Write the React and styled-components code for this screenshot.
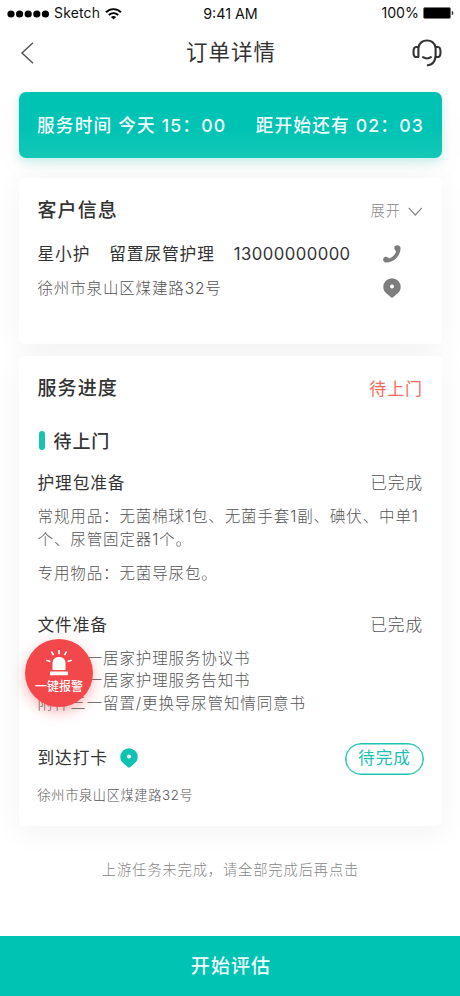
import React from "react";
import styled, { createGlobalStyle } from "styled-components";

const GlobalStyle = createGlobalStyle`
  * { box-sizing: border-box; }
  body {
    margin: 0;
    background: #fff;
    font-family: Inter, "Noto Sans CJK SC", sans-serif;
  }
`;

const teal = "#00c3b3";

const Screen = styled.div`
  position: relative;
  display: flex;
  flex-direction: column;
  width: 460px;
  height: 996px;
  overflow: hidden;
  background: #fff;
`;

const StatusBar = styled.div`
  display: grid;
  grid-template-columns: 1fr auto 1fr;
  align-items: center;
  height: 27px;
  padding: 0 6px 0 7px;
  color: #111;
  font-size: 14.5px;
  line-height: 20px;
`;

const StatusGroup = styled.div`
  display: flex;
  align-items: center;
  justify-content: ${(p) => (p.$end ? "flex-end" : "flex-start")};
  gap: ${(p) => p.$gap}px;
`;

const NavBar = styled.header`
  display: grid;
  grid-template-columns: 1fr auto 1fr;
  align-items: center;
  height: 51px;
  padding: 0 18px 0 20px;
`;

const NavAction = styled.div`
  display: flex;
  justify-content: ${(p) => (p.$end ? "flex-end" : "flex-start")};
`;

const Text = styled.span`
  padding-top: ${(p) => p.$drop || 0}px;
  color: ${(p) => p.$color || "#333"};
  font-size: ${(p) => p.$size}px;
  font-weight: ${(p) => p.$weight || 400};
  letter-spacing: ${(p) => p.$track || 0}px;
  line-height: 1.3;
  white-space: nowrap;
`;

const Content = styled.main`
  display: flex;
  flex-direction: column;
  padding: 14px 18px 0 19px;
`;

const Banner = styled.section`
  display: flex;
  align-items: center;
  justify-content: space-between;
  height: 66px;
  margin-bottom: 20px;
  padding: 0 18px 0 18px;
  border-radius: 7px;
  background: linear-gradient(${teal} 55%, #15c7b6);
  box-shadow: 0 4px 10px rgba(0, 195, 179, 0.22), 0 12px 36px rgba(0, 0, 0, 0.03);
`;

const Card = styled.section`
  display: flex;
  flex-direction: column;
  height: ${(p) => p.$height}px;
  margin-bottom: 12px;
  padding: 10px 19px 0 18.5px;
  border-radius: 5px;
  background: #fff;
  box-shadow: 0 6px 30px rgba(0, 0, 0, 0.055);
`;

const Row = styled.div`
  display: flex;
  align-items: center;
  justify-content: ${(p) => (p.$spread ? "space-between" : "flex-start")};
  gap: ${(p) => p.$gap || 0}px;
  height: ${(p) => p.$height}px;
  margin-top: ${(p) => p.$top || 0}px;
  flex: none;
`;

const ContactIcon = styled.div`
  display: flex;
  justify-content: center;
  width: 24px;
  margin-left: auto;
  margin-right: 19px;
`;

const StageMarker = styled.div`
  width: 6px;
  height: 19px;
  margin-left: 1px;
  border-radius: 3px;
  background: #15c4b3;
`;

const Paragraph = styled.p`
  margin: ${(p) => p.$top}px -8px 0 0;
  color: #555;
  font-size: 15.5px;
  font-weight: 300;
  letter-spacing: 0.88px;
  line-height: ${(p) => p.$line}px;
  white-space: nowrap;
`;

const PendingButton = styled.button`
  display: flex;
  align-items: center;
  justify-content: center;
  width: 79px;
  height: 32px;
  margin-right: -1px;
  padding: 0 0 1px;
  border: 1px solid #1dc2b3;
  box-shadow: inset 0 0 0 0.5px #1dc2b3;
  border-radius: 16px;
  background: #fff;
  font-family: inherit;
`;

const Hint = styled.div`
  display: flex;
  justify-content: center;
  margin-top: 20px;
`;

const StartButton = styled.button`
  display: flex;
  align-items: center;
  justify-content: center;
  height: 60px;
  margin-top: auto;
  padding: 0 0 0 2px;
  border: 0;
  background: ${teal};
  font-family: inherit;
`;

const AlarmButton = styled.button`
  position: absolute;
  left: 25px;
  top: 639px;
  display: flex;
  flex-direction: column;
  align-items: center;
  gap: 2px;
  width: 68px;
  height: 68px;
  padding: 10px 0 0;
  border: 0;
  border-radius: 50%;
  background: #f3484b;
  box-shadow: 0 5px 14px rgba(243, 72, 75, 0.38);
  font-family: inherit;
`;

const SignalDots = () => (
  <svg width="42" height="8" viewBox="0 0 42 8">
    {[4, 12.6, 21.2, 29.8, 38.4].map((x) => (
      <circle key={x} cx={x} cy="4" r="3.6" fill="#000" />
    ))}
  </svg>
);

const Wifi = () => (
  <svg width="17" height="12" viewBox="0 0 17 12" fill="none" stroke="#000" strokeWidth="1.9">
    <path d="M1 4.2C5.2.1 11.8.1 16 4.2" />
    <path d="M3.8 7C6.5 4.5 10.5 4.5 13.2 7" />
    <path d="M5.9 8.9C7.4 7.6 9.6 7.6 11.1 8.9L8.5 11.6Z" fill="#000" stroke="none" />
  </svg>
);

const Battery = () => (
  <svg width="31" height="12" viewBox="0 0 31 12">
    <rect x=".5" y=".5" width="27" height="11" rx="1.5" fill="#000" stroke="#777" />
    <path d="M28.8 4v4c1-.3 1.5-1 1.5-2s-.5-1.7-1.5-2Z" fill="#222" />
  </svg>
);

const BackArrow = () => (
  <svg width="15" height="22" viewBox="0 0 15 22" fill="none" stroke="#555" strokeWidth="1.5">
    <path d="M13 .8 2 11l11 10.2" />
  </svg>
);

const Headset = () => (
  <svg width="30" height="28" viewBox="0 0 30 28" fill="none" stroke="#333" strokeWidth="2.1" strokeLinecap="round" strokeLinejoin="round">
    <path d="M6.4 8.1C7.6 4 10.9 1.5 15 1.5s7.4 2.5 8.6 6.6" />
    <path d="M6.4 8H4Q1.5 8 1.5 13T4 18h2.4Z" />
    <path d="M23.6 8H26q2.5 0 2.5 5T26 18h-2.4Z" />
    <path d="M23.6 18c-.8 4.7-3.7 7.8-7.8 8.3M11 18.2c2.5 1.6 5.4 1.6 7.9 0" />
  </svg>
);

const ChevronDown = () => (
  <svg width="16" height="14" viewBox="0 0 16 14" fill="none" stroke="#888" strokeWidth="1.2">
    <path d="m1.7 4.8 6.6 7.2 6.6-7.2" />
  </svg>
);

const Phone = () => (
  <svg width="18" height="18" viewBox="0 0 18 18" fill="#7d7d7d">
    <path d="M11.5 1.8C12.4.3 14.4-.1 16 .7c1.3.7 1.7 1.8 1.5 3.3C16.8 11.6 11 17 3.5 17.5c-1.3.1-2.4-.4-3-1.5-.8-1.4-.4-3 .9-3.8 1.3-.7 2.8-.3 3.8.6.6.5 1.2.5 2 .1 2.4-1.1 4.4-3 5.5-5.2.4-.9.3-1.4-.3-2.1-1-1.1-1.5-2.5-.9-3.8Z" />
  </svg>
);

const Pin = ({ color }) => (
  <svg width="18" height="20" viewBox="0 0 18 20">
    <path d="M9 .3A8.7 8.7 0 0 0 .3 9c0 2.5 1 4.5 2.7 6l4.9 4.3q1.1.8 2.2 0L15 15c1.7-1.5 2.7-3.5 2.7-6A8.7 8.7 0 0 0 9 .3Z" fill={color} />
    <circle cx="9" cy="8.6" r="2" fill="#fff" />
  </svg>
);

const Siren = () => (
  <svg width="28" height="28" viewBox="0 0 28 28" fill="#fff">
    <path d="M7.5 21v-6.5C7.5 10.2 10 8 14 8s6.5 2.2 6.5 6.5V21Z" />
    <rect x="5" y="22.5" width="18" height="3.7" rx=".6" />
    <path d="M14 1v4.2M6.4 2.5l2.2 3.6M21.6 2.5l-2.2 3.6M1.3 11.2l4.1 1.2M26.7 11.2l-4.1 1.2" stroke="#fff" strokeWidth="1.6" />
  </svg>
);

export default function App() {
  return (
    <>
      <GlobalStyle />
      <Screen lang="zh-CN">
        <StatusBar>
          <StatusGroup $gap={5}>
            <SignalDots />
            <Text $size={14} $color="#111" $track={0.15}>Sketch</Text>
            <Wifi />
          </StatusGroup>
          <Text $size={14.3} $color="#111" $drop={1}>9:41 AM</Text>
          <StatusGroup $end $gap={4}>
            <Text $size={14.2} $color="#111">100%</Text>
            <Battery />
          </StatusGroup>
        </StatusBar>

        <NavBar>
          <NavAction><BackArrow /></NavAction>
          <Text $size={21.5} $track={1}>订单详情</Text>
          <NavAction $end><Headset /></NavAction>
        </NavBar>

        <Content>
          <Banner>
            <Text $size={17.7} $weight={500} $track={1.15} $color="#f2ffff">服务时间 今天 15：00</Text>
            <Text $size={17.7} $weight={500} $track={1.15} $color="#f2ffff">距开始还有 02：03</Text>
          </Banner>

          <Card $height={166}>
            <Row $height={44} $spread>
              <Text $size={19} $weight={500} $track={1.1} $drop={3}>客户信息</Text>
              <Row $gap={6}>
                <Text $size={14.3} $track={0.9} $color="#888" $drop={2} $weight={300}>展开</Text>
                <ChevronDown />
              </Row>
            </Row>
            <Row $height={44} $gap={19}>
              <Text $size={16.7} $track={0.9} $drop={2}>星小护</Text>
              <Text $size={16.7} $track={0.9} $drop={2}>留置尿管护理</Text>
              <Text $size={16.7} $track={0.45} $drop={2}>13000000000</Text>
              <ContactIcon><Phone /></ContactIcon>
            </Row>
            <Row $height={24}>
              <Text $size={15.5} $track={0.85} $color="#555" $weight={300} $drop={2}>徐州市泉山区煤建路32号</Text>
              <ContactIcon><Pin color="#7d7d7d" /></ContactIcon>
            </Row>
          </Card>

          <Card $height={470}>
            <Row $height={44} $spread>
              <Text $size={19} $weight={500} $track={1.1} $drop={3}>服务进度</Text>
              <Text $size={17} $track={0.9} $color="#f56e5b" $drop={2}>待上门</Text>
            </Row>
            <Row $height={60} $gap={9}>
              <StageMarker />
              <Text $size={18} $weight={500} $track={0.9} $drop={3}>待上门</Text>
            </Row>
            <Row $height={24} $spread>
              <Text $size={16.7} $track={0.9} $drop={3}>护理包准备</Text>
              <Text $size={16.7} $track={0.9} $color="#555" $weight={300} $drop={3}>已完成</Text>
            </Row>
            <Paragraph $top={11} $line={23}>
              常规用品：无菌棉球1包、无菌手套1副、碘伏、中单1
              <br />
              个、尿管固定器1个。
            </Paragraph>
            <Paragraph $top={11} $line={23}>专用物品：无菌导尿包。</Paragraph>
            <Row $height={24} $top={27} $spread>
              <Text $size={16.7} $track={0.9} $drop={3}>文件准备</Text>
              <Text $size={16.7} $track={0.9} $color="#555" $weight={300} $drop={3}>已完成</Text>
            </Row>
            <Paragraph $top={11.5} $line={22.5}>
              附件一一居家护理服务协议书
              <br />
              附件二一居家护理服务告知书
              <br />
              附件三一留置/更换导尿管知情同意书
            </Paragraph>
            <Row $height={32} $top={27.5} $spread>
              <Row $gap={12}>
                <Text $size={16.7} $track={0.9}>到达打卡</Text>
                <Pin color="#10c2b2" />
              </Row>
              <PendingButton>
                <Text $size={16.7} $track={0.9} $color="#1dc2b3" $drop={1}>待完成</Text>
              </PendingButton>
            </Row>
            <Row $height={24} $top={9}>
              <Text $size={13.2} $track={0.65} $color="#555" $weight={300} $drop={1}>徐州市泉山区煤建路32号</Text>
            </Row>
          </Card>

          <Hint>
            <Text $size={14.3} $track={0.85} $color="#888" $weight={300} $drop={3}>上游任务未完成，请全部完成后再点击</Text>
          </Hint>
        </Content>

        <StartButton>
          <Text $size={19} $weight={500} $track={1.1} $color="#f2ffff" $drop={3}>开始评估</Text>
        </StartButton>

        <AlarmButton>
          <Siren />
          <Text $size={12} $weight={500} $color="#fff">一键报警</Text>
        </AlarmButton>
      </Screen>
    </>
  );
}
